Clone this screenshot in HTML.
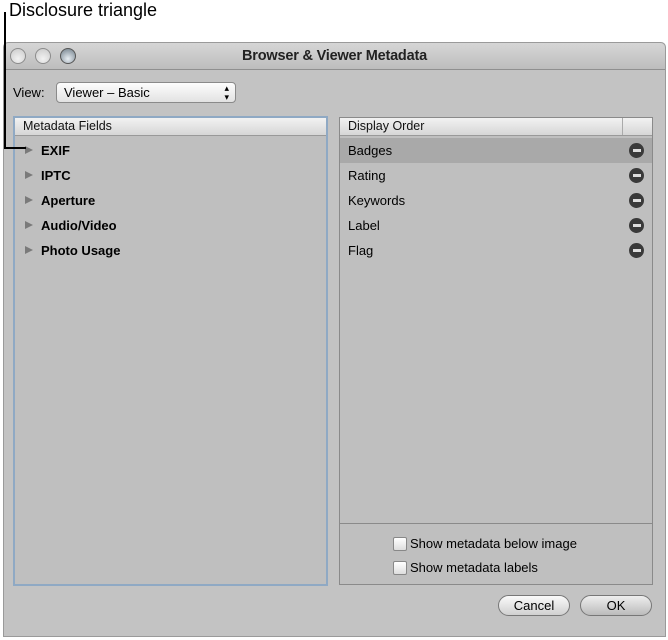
<!DOCTYPE html>
<html><head><meta charset="utf-8">
<style>
*{box-sizing:border-box;margin:0;padding:0}
body{width:668px;height:640px;background:#fff;position:relative;font-family:"Liberation Sans",sans-serif;overflow:hidden}
.abs{position:absolute}
.win{left:3px;top:42px;width:663px;height:595px;background:#c3c3c3;border:1px solid #9a9a9a;border-radius:5px 5px 0 0}
.tb{left:0;top:0;width:661px;height:27px;background:linear-gradient(#d6d6d6,#bdbdbd);border-bottom:1px solid #8f8f8f;border-radius:5px 5px 0 0}
.light{width:16px;height:16px;border-radius:50%;border:1px solid #8c8c8c;background:radial-gradient(circle at 50% 70%,#f2f2f2,#c9c9c9);top:5px}
.panel{background:#bfbfbf;border:1px solid #8a8a8a}
.hdr{height:18px;background:linear-gradient(#f2f2f2,#d6d6d6);border-bottom:1px solid #999;font-size:12.5px;line-height:17px;padding-left:8px;color:#111}
.row{position:absolute;left:0;right:0;height:25px;font-size:13px;line-height:25px;color:#000}
.tri{position:absolute;left:10px;top:8px;width:0;height:0;border-left:8px solid #7a7a7a;border-top:4.5px solid transparent;border-bottom:4.5px solid transparent}
.minus{position:absolute;right:8px;top:5px;width:15px;height:15px;border-radius:50%;background:#3a3a3a}
.minus:after{content:"";position:absolute;left:3.5px;top:6px;width:8px;height:3px;background:#ddd}
.cb{width:14px;height:14px;border:1px solid #888;background:linear-gradient(#fff,#ddd);border-radius:2px}
.btn{height:21px;border:1px solid #777;border-radius:11px;background:linear-gradient(#fafafa,#d0d0d0);font-size:13px;text-align:center;line-height:19px}
</style></head><body>
<div class="abs" style="left:9px;top:0;font-size:18px;color:#000">Disclosure triangle</div>
<div class="abs win">
 <div class="abs tb">
  <div class="abs light" style="left:6px"></div>
  <div class="abs light" style="left:31px"></div>
  <div class="abs light" style="left:56px;background:radial-gradient(circle at 50% 70%,#e8eef3,#6f7d88);border-color:#555"></div>
  <div class="abs" style="left:0;width:661px;top:5px;text-align:center;font-size:14.5px;color:#222;font-weight:bold;letter-spacing:-0.2px">Browser &amp; Viewer Metadata</div>
 </div>
 <div class="abs" style="left:9px;top:42px;font-size:13px">View:</div>
 <div class="abs" style="left:52px;top:39px;width:180px;height:21px;border:1px solid #8a8a8a;border-radius:4px;background:linear-gradient(#fdfdfd,#e2e2e2);font-size:13px;line-height:19px;padding-left:7px">Viewer – Basic<span style="position:absolute;right:6px;font-size:9px;line-height:9px;top:1px">▴<br>▾</span></div>
 <div class="abs panel" style="left:9px;top:73px;width:315px;height:470px;border:2px solid #8fa9c4">
  <div class="hdr">Metadata Fields</div>
  <div class="row" style="top:20px"><div class="tri"></div><b style="margin-left:26px">EXIF</b></div>
  <div class="row" style="top:45px"><div class="tri"></div><b style="margin-left:26px">IPTC</b></div>
  <div class="row" style="top:70px"><div class="tri"></div><b style="margin-left:26px">Aperture</b></div>
  <div class="row" style="top:95px"><div class="tri"></div><b style="margin-left:26px">Audio/Video</b></div>
  <div class="row" style="top:120px"><div class="tri"></div><b style="margin-left:26px">Photo Usage</b></div>
 </div>
 <div class="abs panel" style="left:335px;top:74px;width:314px;height:468px">
  <div class="hdr" style="position:relative">Display Order<div class="abs" style="left:282px;top:0;width:1px;height:17px;background:#aaa"></div></div>
  <div class="row" style="top:20px;background:#a9a9a9;padding-left:8px">Badges<div class="minus"></div></div>
  <div class="row" style="top:45px;padding-left:8px">Rating<div class="minus"></div></div>
  <div class="row" style="top:70px;padding-left:8px">Keywords<div class="minus"></div></div>
  <div class="row" style="top:95px;padding-left:8px">Label<div class="minus"></div></div>
  <div class="row" style="top:120px;padding-left:8px">Flag<div class="minus"></div></div>
  <div class="abs" style="left:0;top:405px;width:312px;height:1px;background:#8a8a8a"></div>
  <div class="abs cb" style="left:53px;top:419px"></div>
  <div class="abs" style="left:70px;top:418px;font-size:13px">Show metadata below image</div>
  <div class="abs cb" style="left:53px;top:443px"></div>
  <div class="abs" style="left:70px;top:442px;font-size:13px">Show metadata labels</div>
 </div>
 <div class="abs btn" style="left:494px;top:552px;width:72px">Cancel</div>
 <div class="abs btn" style="left:576px;top:552px;width:72px;background:linear-gradient(#eee,#bbb)">OK</div>
</div>
<div class="abs" style="left:4px;top:12px;width:2px;height:137px;background:#000;z-index:10"></div>
<div class="abs" style="left:4px;top:147px;width:22px;height:2px;background:#000;z-index:10"></div>
</body></html>
